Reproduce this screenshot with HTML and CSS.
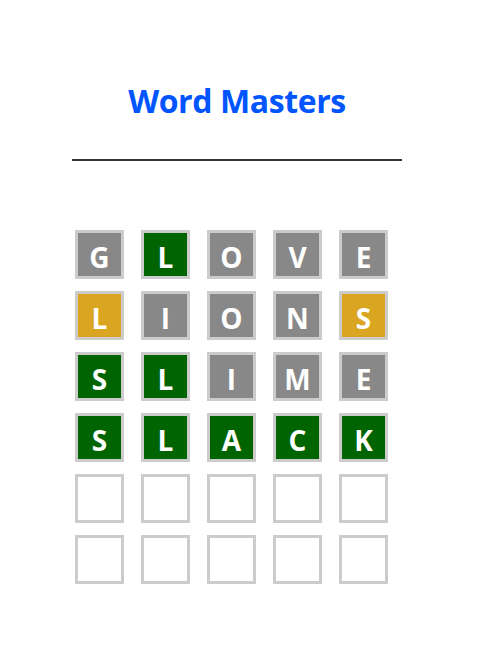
FILE: index.html
```html
<!DOCTYPE html>
<html lang="en">
<head>
<meta charset="utf-8">
<title>Word Masters</title>
<link rel="stylesheet" href="styles.css">
</head>
<body>
<div class="page">
  <h1 class="title">Word Masters</h1>
  <div class="divider"></div>
  <div class="board">
    <div class="tile gray">G</div><div class="tile green">L</div><div class="tile gray">O</div><div class="tile gray">V</div><div class="tile gray">E</div>
    <div class="tile yellow">L</div><div class="tile gray">I</div><div class="tile gray">O</div><div class="tile gray">N</div><div class="tile yellow">S</div>
    <div class="tile green">S</div><div class="tile green">L</div><div class="tile gray">I</div><div class="tile gray">M</div><div class="tile gray">E</div>
    <div class="tile green">S</div><div class="tile green">L</div><div class="tile green">A</div><div class="tile green">C</div><div class="tile green">K</div>
    <div class="tile"></div><div class="tile"></div><div class="tile"></div><div class="tile"></div><div class="tile"></div>
    <div class="tile"></div><div class="tile"></div><div class="tile"></div><div class="tile"></div><div class="tile"></div>
  </div>
</div>
</body>
</html>
```
FILE: styles.css
```css
html, body {
  margin: 0;
  padding: 0;
  background: #ffffff;
}
body {
  font-family: "Open Sans", "Noto Sans", "Liberation Sans", sans-serif;
}
.page {
  width: 474px;
  padding-top: 81px;
  display: flex;
  flex-direction: column;
}
.title {
  margin: 0;
  font-size: 32px;
  line-height: 40px;
  font-weight: 700;
  letter-spacing: -0.4px;
  color: #0055ff;
  text-align: center;
}
.divider {
  margin: 38px 72px 0 72px;
  height: 2px;
  background: #333333;
}
.board {
  margin: 69px 0 0 75px;
  display: grid;
  grid-template-columns: repeat(5, 49px);
  grid-auto-rows: 49px;
  column-gap: 17px;
  row-gap: 12px;
}
.tile {
  box-sizing: border-box;
  width: 49px;
  height: 49px;
  border: 3px solid #cccccc;
  display: flex;
  align-items: center;
  justify-content: center;
  padding-top: 4px;
  color: #ffffff;
  font-size: 28px;
  font-weight: 700;
  line-height: 1;
}
.gray { background: #888888; }
.green { background: #006400; }
.yellow { background: #daa520; }
```
